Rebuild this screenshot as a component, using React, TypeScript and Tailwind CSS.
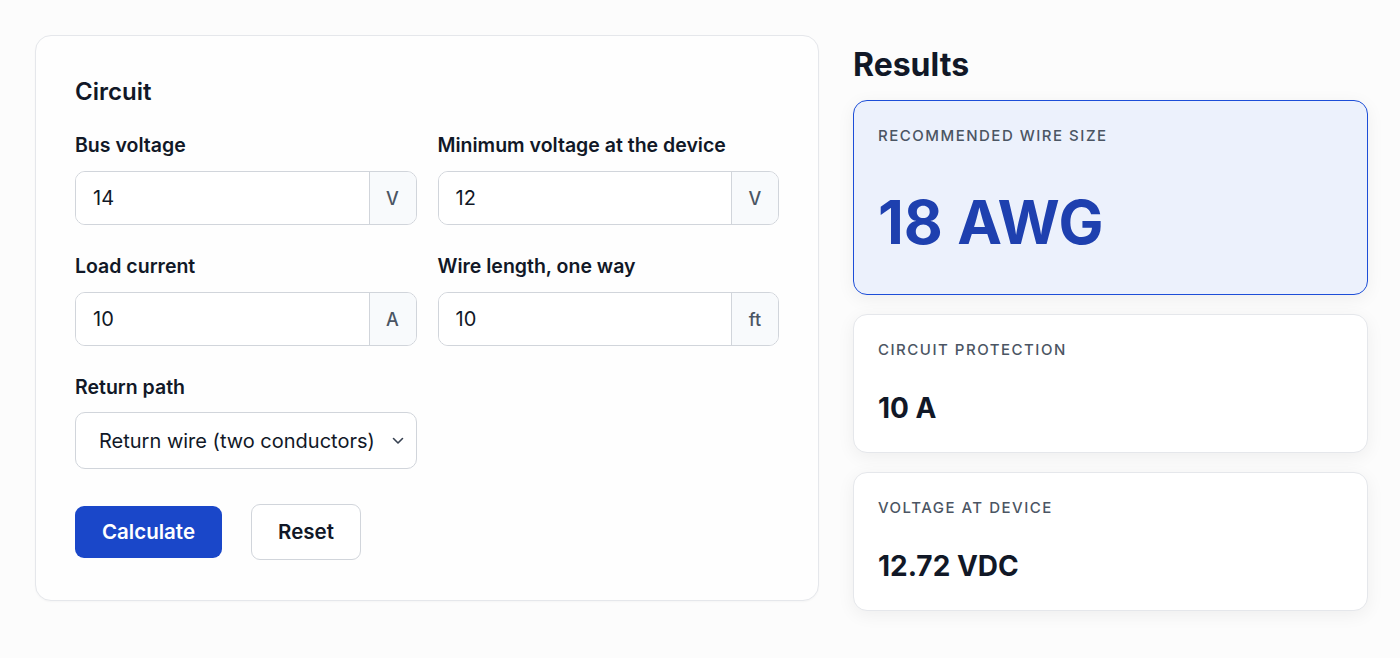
import React from "react";

function Field({ label, value, unit }: { label: string; value: string; unit: string }) {
  return (
    <div className="flex flex-col">
      <label className="text-[19.5px] leading-[26px] font-semibold text-[#111827] mb-[13px]">{label}</label>
      <div className="flex h-[54px] rounded-[10px] border border-[#d1d5db] bg-white overflow-hidden">
        <input
          className="flex-1 min-w-0 pl-[17px] text-[20px] text-[#111827] outline-none bg-white"
          style={{ fontFamily: "Inter, sans-serif" }}
          defaultValue={value}
        />
        <div className="w-[47px] flex items-center justify-center border-l border-[#d1d5db] bg-[#f8fafc] text-[18px] font-medium text-[#4b5563]">
          {unit}
        </div>
      </div>
    </div>
  );
}

function ResultCard({
  label,
  value,
  primary,
}: {
  label: string;
  value: string;
  primary?: boolean;
}) {
  if (primary) {
    return (
      <div className="rounded-[14px] border border-[#1d4ed8] bg-[#ecf1fc] px-6 pt-[24px] pb-[42px] shadow-[0_4px_18px_rgba(0,0,0,0.06)]">
        <div className="text-[15px] leading-[22px] font-medium tracking-[0.1em] text-[#4b5563] uppercase">{label}</div>
        <div className="mt-[45px] text-[60px] leading-[60px] font-bold text-[#1e40af]">{value}</div>
      </div>
    );
  }
  return (
    <div className="rounded-[14px] border border-[#e5e7eb] bg-white px-6 pt-[24px] pb-[26px] shadow-[0_4px_18px_rgba(0,0,0,0.06)]">
      <div className="text-[15px] leading-[22px] font-medium tracking-[0.1em] text-[#4b5563] uppercase">{label}</div>
      <div className="mt-[29px] text-[28px] leading-[36px] font-bold text-[#111827]">{value}</div>
    </div>
  );
}

export default function App() {
  return (
    <div
      className="min-h-[658px] w-[1400px] bg-[#fcfcfc] flex items-start pl-[35px] pt-[35px] gap-[34px]"
      style={{ fontFamily: "Inter, 'Noto Sans', sans-serif" }}
    >
      <div className="w-[784px] rounded-[16px] border border-[#e5e7eb] bg-[#fefefe] pt-[40px] pb-[40px] px-[39px] shadow-[0_1px_2px_rgba(0,0,0,0.03)]">
        <h2 className="text-[24px] leading-[32px] font-semibold text-[#111827] mb-[24px]">Circuit</h2>
        <div className="grid grid-cols-2 gap-x-[21px] gap-y-[28px]">
          <Field label="Bus voltage" value="14" unit="V" />
          <Field label="Minimum voltage at the device" value="12" unit="V" />
          <Field label="Load current" value="10" unit="A" />
          <Field label="Wire length, one way" value="10" unit="ft" />
          <div className="flex flex-col">
            <label className="text-[19.5px] leading-[26px] font-semibold text-[#111827] mb-[12px]">Return path</label>
            <div className="relative h-[57px]">
              <select
                className="appearance-none w-full h-full rounded-[10px] border border-[#d1d5db] bg-white pl-[23px] pr-10 text-[20px] text-[#111827] outline-none"
                style={{ fontFamily: "Inter, sans-serif" }}
                defaultValue="return"
              >
                <option value="return">Return wire (two conductors)</option>
                <option value="chassis">Chassis ground</option>
              </select>
              <svg
                className="absolute right-[13px] top-[25px] pointer-events-none"
                width="12"
                height="8"
                viewBox="0 0 12 8"
                fill="none"
              >
                <path d="M1.5 1.5L6 6L10.5 1.5" stroke="#374151" strokeWidth="1.6" strokeLinecap="round" strokeLinejoin="round" />
              </svg>
            </div>
          </div>
          <div />
        </div>
        <div className="flex items-center gap-[29px] mt-[35px]">
          <button className="h-[52px] w-[147px] rounded-[9px] bg-[#1a47c9] text-white text-[20.5px] font-semibold">
            Calculate
          </button>
          <button className="h-[56px] w-[110px] rounded-[9px] border border-[#d1d5db] bg-white text-[#111827] text-[20.5px] font-semibold">
            Reset
          </button>
        </div>
      </div>

      <div className="w-[515px] flex flex-col">
        <h2 className="mt-[12px] text-[32px] leading-[36px] font-bold text-[#111827] mb-[17px]">Results</h2>
        <div className="flex flex-col gap-[19px]">
          <ResultCard label="Recommended wire size" value="18 AWG" primary />
          <ResultCard label="Circuit protection" value="10 A" />
          <ResultCard label="Voltage at device" value="12.72 VDC" />
        </div>
      </div>
    </div>
  );
}
